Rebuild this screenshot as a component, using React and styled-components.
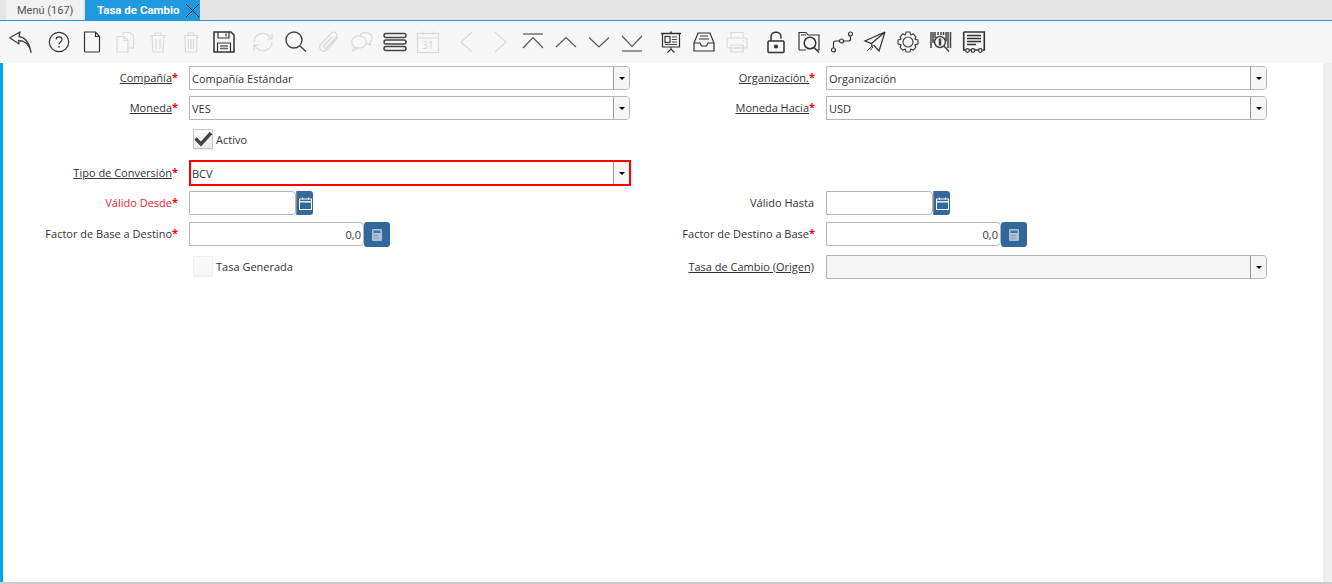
import React from "react";
import styled, { createGlobalStyle } from "styled-components";

const Global = createGlobalStyle`
  html, body { margin: 0; padding: 0; height: 100%; background: #fff; overflow: hidden; }
  #root { height: 100%; }
`;

const Page = styled.div`
  width: 1332px; height: 584px; display: flex; flex-direction: column;
  font-family: "Open Sans", "Noto Sans", sans-serif; font-size: 11px; color: #333;
`;
const TabBar = styled.div`
  height: 20px; display: flex; align-items: stretch; padding-left: 6px; gap: 2px;
  background: #e6e6e6; border-bottom: 1px solid #1e9be0; flex: none;
`;
const Tab = styled.div`
  display: flex; align-items: center; font-family: Roboto, sans-serif; white-space: nowrap;
  font-size: ${p => (p.$active ? "11.5px" : "11px")};
  padding-left: ${p => (p.$active ? "12px" : "11px")};
  width: ${p => (p.$active ? "115px" : "77px")}; box-sizing: border-box;
  background: ${p => (p.$active ? "#1f9ae0" : "#f1f1f1")};
  color: ${p => (p.$active ? "#fff" : "#555")};
  font-weight: ${p => (p.$active ? 700 : 400)};
  position: relative;
`;
const TabClose = styled.svg`
  position: absolute; right: 0; top: 3px; width: 15px; height: 15px;
`;
const Toolbar = styled.div`
  height: 42px; flex: none; background: #f7f7f7; display: flex; align-items: center; padding-left: 3px;
`;
const ToolBtn = styled.div`
  width: 33px; height: 42px; flex: none; display: flex; align-items: center; justify-content: center;
  margin-left: ${p => (p.$gap ? "6px" : 0)};
  svg { width: 22px; height: 22px; fill: none; stroke: ${p => (p.$off ? "#dadada" : "#333")}; stroke-width: 1.2; overflow: visible; }
`;
const Body = styled.div`
  flex: 1; display: flex; min-height: 0; border-bottom: 2px solid #ccc;
`;
const Accent = styled.div`
  width: 3px; background: #00a7ee; flex: none;
`;
const Form = styled.div`
  flex: 1; padding-left: 1px; background: #fff;
`;
const Scroll = styled.div`
  width: 9px; background: #efefef; flex: none;
`;
const Row = styled.div`
  display: flex; height: ${p => p.$h}px; align-items: center;
`;
const Cell = styled.div`
  width: 637px; flex: none; display: flex; align-items: center;
`;
const Label = styled.div`
  width: 173px; flex: none; text-align: right; margin-right: 12px; white-space: nowrap;
  color: ${p => (p.$error ? "#f0262c" : "#333")};
  position: relative; top: -1px;
`;
const LabelText = styled.span`
  text-decoration: ${p => (p.$link ? "underline" : "none")};
`;
const Star = styled.span`
  display: inline-block; width: 5px; text-align: left;
  color: #f00; font-size: 11px; line-height: 10px; font-weight: 700; position: relative; top: -1px;
`;
const Field = styled.div`
  width: ${p => p.$w}px; height: ${p => (p.$focus ? 26 : 24)}px; box-sizing: border-box; flex: none;
  display: flex; align-items: stretch;
  border: ${p => (p.$focus ? "2px solid #f00" : "1px solid #b5b5b5")};
  border-radius: ${p => (p.$focus ? 0 : "0 4px 4px 0")};
  background: ${p => (p.$disabled ? "#f5f5f5" : "#fff")};
`;
const Value = styled.div`
  flex: 1; display: flex; align-items: center; padding: ${p => (p.$focus ? "0 1px" : "0 2px")};
  justify-content: ${p => (p.$right ? "flex-end" : "flex-start")};
  color: #333; line-height: 1;
`;
const Drop = styled.div`
  width: 16px; flex: none; box-sizing: border-box; background: #f6f6f6; border-left: 1px solid #999;
  border-radius: 0 3px 3px 0; display: flex; align-items: center; justify-content: center;
  &::after { content: ""; border-style: solid; border-width: 3px 3.5px 0 3.5px; border-color: #000 transparent transparent transparent; }
`;
const DateBtn = styled.div`
  width: 17px; height: 24px; flex: none; box-sizing: border-box; background: #32689a; border-left: 1px solid #888;
  border-radius: 0 3px 3px 0; display: flex; align-items: center; justify-content: center;
  svg { width: 13px; height: 13px; fill: none; stroke: #fff; stroke-width: 1; }
`;
const CalcBtn = styled.div`
  width: 26px; height: 25px; margin-top: 1px; flex: none; background: #32689a; border-radius: 3px;
  display: flex; align-items: center; justify-content: center;
  svg { width: 10px; height: 12px; }
`;
const Check = styled.div`
  width: 20px; height: 20px; box-sizing: border-box; margin: 0 0 2px 4px; flex: none;
  border: 1px solid ${p => (p.$on ? "#c4c4c4" : "#f0f0f0")};
  background: linear-gradient(#fafafa, ${p => (p.$on ? "#ececec" : "#f7f7f7")});
  box-shadow: 0 1px 1px rgba(0,0,0,.06);
  display: flex; align-items: center; justify-content: center;
  svg { width: 20px; height: 20px; overflow: visible; }
`;
const CheckLabel = styled.span`
  margin: 0 0 2px 3px;
`;
const Spacer = styled.div`
  width: 185px; flex: none;
`;

const I = ({ children }) => <svg viewBox="0 0 22 22">{children}</svg>;

const tools = [
  { k: "back", d: <I><path d="M11 1 L.8 6.8 L10 13 L9.5 9.5 C15 9.5 20.5 13 22 21.5 C20.5 12 16 6.5 10 5.5 Z" strokeWidth="1.3" stroke="#444" strokeLinejoin="round" /></I> },
  { k: "help", gap: 1, d: <I><circle cx="11" cy="11" r="9.7" /><path d="M8.2 8.6 C8.2 5 14 5 14 8.6 C14 11 11 10.8 11 13.2" /><path d="M11 15 V16.5" strokeWidth="1.6" /></I> },
  { k: "new", d: <I><path d="M3.5 1 H14.5 L18.5 5.5 V20 Q18.5 21 17.5 21 H4.5 Q3.5 21 3.5 20 Z" /><path d="M14.5 1 V5.5 H18.5" /></I> },
  { k: "copy", off: 1, d: <I><path d="M9 4 V1.5 H16 L19.5 5 V17 H15" /><path d="M3 5.5 H10 L14 9.5 V21 H3 Z" /><path d="M10 5.5 V9.5 H14" /></I> },
  { k: "del", off: 1, d: <I><path d="M3 4.5 H19 M8 4.5 V2 H14 V4.5 M5 4.5 L6 21 H16 L17 4.5 M9 8 V18 M13 8 V18" /></I> },
  { k: "delall", off: 1, d: <I><path d="M4 4.5 H18 M8 4.5 V2 H14 V4.5 M5 4.5 L5.5 21 H16.5 L17 4.5 M8.5 8 V18 M11 8 V18 M13.5 8 V18" /></I> },
  { k: "save", d: <I><path d="M1 1 H18 L21 4 V21 H1 Z" strokeWidth="1.5" /><path d="M5 1 V7 H16 V1 M13 2.5 V5.5" /><path d="M4.5 21 V12 H17.5 V21" /><path d="M7 15 H15 M7 17.5 H15" strokeWidth="1.6" stroke="#666" /></I> },
  { k: "refresh", gap: 1, off: 1, d: <I><path d="M2 11 C2 3 13 -1 18 6 L20 8 M20 2.5 V8 H15" /><path d="M20 11 C20 19 9 23 4 16 L2 14 M2 19.5 V14 H7" /></I> },
  { k: "find", d: <I><circle cx="9" cy="9" r="8" strokeWidth="1.4" stroke="#444" /><path d="M15 15 L21 20.5" strokeWidth="1.5" stroke="#444" /></I> },
  { k: "attach", off: 1, d: <I><path d="M20 6.5 L9 18.5 C5 22.5 -1 17.5 3 13 L13 2.5 C16 -.5 21 3 18 6.5 L8.5 16.5 C6.5 18.5 4.5 16.5 6 14.5 L14 6" /></I> },
  { k: "chat", off: 1, d: <I><ellipse cx="8" cy="11" rx="7.3" ry="6.2" /><path d="M3 16 L2 20 L6.5 17" /><path d="M9 4.5 C11 0.5 21 0.5 21 7 C21 9.5 20 10.5 18.8 11.5 L19.5 14 L15.5 12.5" /></I> },
  { k: "menu", d: <I><rect x="0" y="2.5" width="22" height="4" rx="2" strokeWidth="1.5" stroke="#444" /><rect x="0" y="9" width="22" height="4" rx="2" strokeWidth="1.5" stroke="#444" /><rect x="0" y="15.5" width="22" height="4" rx="2" strokeWidth="1.5" stroke="#444" /></I> },
  { k: "cal", off: 1, d: <I><rect x=".5" y="2.5" width="21" height="19" /><path d="M.5 7 H21.5 M6 .5 V4 M16 .5 V4" /><text x="11" y="18" textAnchor="middle" fontSize="10" fontFamily="Open Sans, sans-serif" fill="#d4d4d4" stroke="none">31</text></I> },
  { k: "prev", gap: 1, off: 1, d: <I><path d="M16 1 L5 11 L16 21" /></I> },
  { k: "next", off: 1, d: <I><path d="M6 1 L17 11 L6 21" /></I> },
  { k: "first", d: <I><path d="M1 3 H21" stroke="#555" /><path d="M1 17 L11 6.5 L21 17" stroke="#555" /></I> },
  { k: "up", d: <I><path d="M1 16 L11 6.5 L21 16" stroke="#555" /></I> },
  { k: "down", d: <I><path d="M1 6.5 L11 16 L21 6.5" stroke="#555" /></I> },
  { k: "last", d: <I><path d="M1 5 L11 15.5 L21 5" stroke="#555" /><path d="M1 20 H21" stroke="#555" /></I> },
  { k: "present", gap: 1, d: <I><path d="M1 2.5 H21 M11 .5 V2.5" strokeWidth="1.6" /><path d="M2.5 2.5 V16 H19.5 V2.5" /><rect x="5" y="5.5" width="5" height="6" /><path d="M12 6 H17 M12 8.5 H17 M12 11 H17 M5 13.5 H17" strokeWidth=".9" /><path d="M11 16 V19 M7.5 21.5 L11 18 L14.5 21.5" /></I> },
  { k: "inbox", d: <I><path d="M5 2 H17 L21 12 V20 H1 V12 Z" /><path d="M1 12 H7 L8.5 15 H13.5 L15 12 H21" /><path d="M7 5 H15 M6 8 H16" /></I> },
  { k: "print", off: 1, d: <I><path d="M5 7 V1.5 H17 V7" /><rect x="1" y="7" width="20" height="10" rx="2" /><path d="M5 14 H17 V21 H5 Z M8 17 H14 M17 10 H18.5" /></I> },
  { k: "lock", gap: 1, d: <I><rect x="3" y="10" width="16" height="11.5" rx="1" strokeWidth="1.5" /><path d="M6 10 V6 C6 -.5 16 -.5 16 6 V7.5" strokeWidth="1.5" /><circle cx="11" cy="15.5" r="1.5" fill="#333" /></I> },
  { k: "zoom", d: <I><path d="M1 19 V1.5 H8 L10 4 H21 V19 H19 M1 19 H8 M3 4 H8" /><circle cx="12" cy="12" r="5.8" strokeWidth="1.5" /><path d="M16 16.5 L21 21.5" strokeWidth="1.5" /></I> },
  { k: "route", d: <I><circle cx="2.5" cy="19" r="2" /><circle cx="10.5" cy="10" r="2" /><circle cx="19.5" cy="3" r="2" /><path d="M2.5 17 V12 Q2.5 10 4.5 10 H8.5 M12.5 10 H17.5 Q19.5 10 19.5 8 V5" /></I> },
  { k: "send", d: <I><path d="M21 1 L1 10 L7.5 12.5 Z M21 1 L7.5 12.5 L8.5 17 M21 1 L15 20 L9.5 14" /><path d="M8 15 L3 20 M6 18 H8" strokeWidth=".9" /></I> },
  { k: "gear", d: <I><circle cx="11" cy="11" r="5" stroke="#444" /><path stroke="#444" d="M9 1 H13 L13.6 4 L16.2 2.9 L19 5.8 L17.9 8.2 L21 9 V13 L17.9 13.8 L19 16.2 L16.2 19.1 L13.6 18 L13 21 H9 L8.4 18 L5.8 19.1 L3 16.2 L4.1 13.8 L1 13 V9 L4.1 8.2 L3 5.8 L5.8 2.9 L8.4 4 Z" strokeLinejoin="round" /></I> },
  { k: "barcode", d: <I><path d="M1 1 V17 M3 1 V12 M5 1 V7 M16 1 V10 M18 1 V17 M20.5 1 V17" strokeWidth="1.5" stroke="#444" /><path d="M8 1 V4 M11 1 V4 M13.5 1 V4" strokeWidth="1.5" stroke="#444" /><circle cx="10" cy="11" r="5.5" strokeWidth="1.5" stroke="#444" /><path d="M10 7.5 V14.5" strokeWidth="2.5" stroke="#444" /><path d="M14 15 L19 20.5" strokeWidth="1.6" stroke="#444" /></I> },
  { k: "receipt", d: <I><path d="M.7 1 H21.3 V19 H19.5 M.7 1 V19 H2.5 M6.5 19 H8 M12 19 H15" strokeWidth="1.6" /><circle cx="4.5" cy="19.5" r="1.8" /><circle cx="10" cy="19.5" r="1.8" /><circle cx="17.3" cy="19.5" r="1.8" /><path d="M4 4.5 H18 M4 7.5 H18 M4 10.5 H18 M4 13.5 H13" strokeWidth="1.4" /></I> },
];

const Cal = () => (
  <svg viewBox="0 0 13 13"><rect x=".5" y="2" width="12" height="10.5" /><path d="M.5 4.8 H12.5" strokeWidth="1.4" /><path d="M3.5 .5 V2.5 M9.5 .5 V2.5" /></svg>
);
const Calc = () => (
  <svg viewBox="0 0 10 12"><rect width="10" height="12" rx="1" fill="#aac0d6" /><rect x="1.5" y="1.5" width="7" height="2.5" fill="#4a78a6" /><rect x="1.5" y="6" width="5" height="1" fill="#7fa0c2" /><rect x="1.5" y="8.5" width="5" height="1" fill="#7fa0c2" /></svg>
);

const FieldLabel = ({ text, link, req, error }) => (
  <Label $error={error}>
    <LabelText $link={link}>{text}</LabelText>
    {req && <Star>*</Star>}
  </Label>
);

export default function App() {
  return (
    <Page>
      <Global />
      <TabBar>
        <Tab>Menú (167)</Tab>
        <Tab $active>
          Tasa de Cambio
          <TabClose viewBox="0 0 15 15"><path d="M1 1 L14 14 M14 1 L1 14" stroke="#123" strokeWidth="1" /></TabClose>
        </Tab>
      </TabBar>
      <Toolbar>
        {tools.map(t => (
          <ToolBtn key={t.k} $gap={t.gap} $off={t.off}>{t.d}</ToolBtn>
        ))}
      </Toolbar>
      <Body>
        <Accent />
        <Form>
          <Row $h={30}>
            <Cell><FieldLabel text="Compañía" link req /><Field $w={441}><Value>Compañía Estándar</Value><Drop /></Field></Cell>
            <Cell><FieldLabel text="Organización." link req /><Field $w={441}><Value>Organización</Value><Drop /></Field></Cell>
          </Row>
          <Row $h={30}>
            <Cell><FieldLabel text="Moneda" link req /><Field $w={441}><Value>VES</Value><Drop /></Field></Cell>
            <Cell><FieldLabel text="Moneda Hacia" link req /><Field $w={441}><Value>USD</Value><Drop /></Field></Cell>
          </Row>
          <Row $h={34}>
            <Cell>
              <Spacer />
              <Check $on><svg viewBox="0 0 20 20"><path d="M2.5 9.5 L8 15 L18 4" fill="none" stroke="#444" strokeWidth="3.4" /></svg></Check>
              <CheckLabel>Activo</CheckLabel>
            </Cell>
          </Row>
          <Row $h={32}>
            <Cell><FieldLabel text="Tipo de Conversión" link req /><Field $w={442} $focus><Value $focus>BCV</Value><Drop /></Field></Cell>
          </Row>
          <Row $h={28}>
            <Cell><FieldLabel text="Válido Desde" req error /><Field $w={107} /><DateBtn><Cal /></DateBtn></Cell>
            <Cell><FieldLabel text="Válido Hasta" /><Field $w={107} /><DateBtn><Cal /></DateBtn></Cell>
          </Row>
          <Row $h={34}>
            <Cell><FieldLabel text="Factor de Base a Destino" req /><Field $w={175}><Value $right>0,0</Value></Field><CalcBtn><Calc /></CalcBtn></Cell>
            <Cell><FieldLabel text="Factor de Destino a Base" req /><Field $w={175}><Value $right>0,0</Value></Field><CalcBtn><Calc /></CalcBtn></Cell>
          </Row>
          <Row $h={32}>
            <Cell>
              <Spacer />
              <Check />
              <CheckLabel>Tasa Generada</CheckLabel>
            </Cell>
            <Cell><FieldLabel text="Tasa de Cambio (Origen)" link /><Field $w={441} $disabled><Value /><Drop /></Field></Cell>
          </Row>
        </Form>
        <Scroll />
      </Body>
    </Page>
  );
}
